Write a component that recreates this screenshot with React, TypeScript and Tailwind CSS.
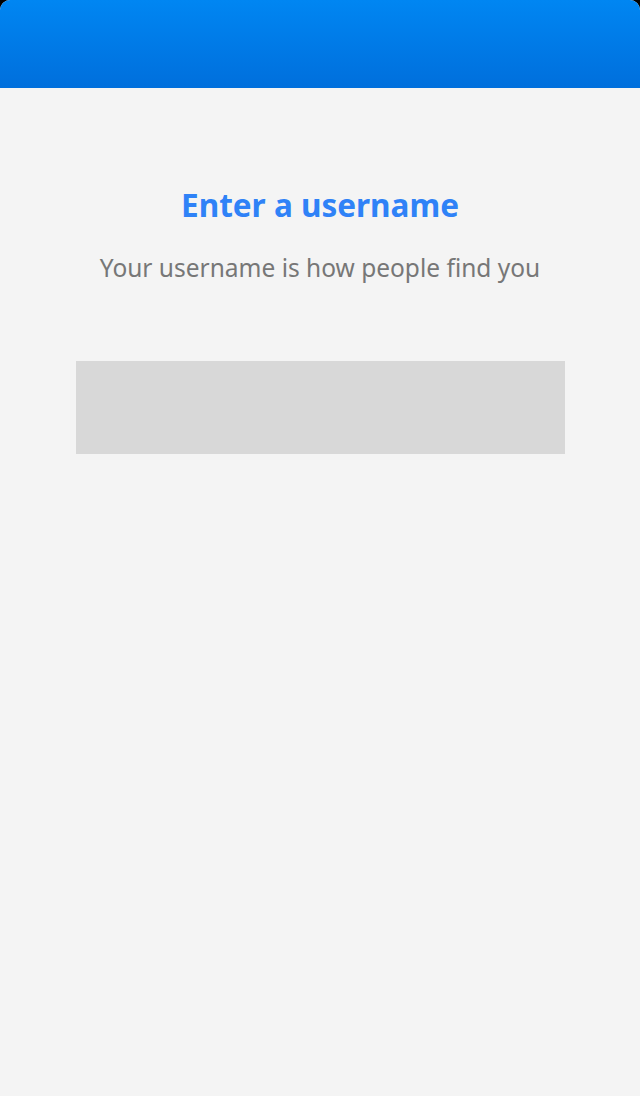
export default function App() {
  return (
    <div className="h-[1096px] w-[640px] bg-black" style={{ fontFamily: '"Noto Sans", sans-serif' }}>
      <div className="flex h-full flex-col overflow-hidden rounded-t-[10px] bg-[#f4f4f4]">
        {/* top bar */}
        <div className="h-[88px] shrink-0 bg-gradient-to-b from-[#0086f2] to-[#006fdc]" />

        <div className="flex flex-col items-center pt-[93px]">
          <h1 className="text-[31.5px] font-bold leading-[48px] text-[#2f82f7]">Enter a username</h1>
          <p className="mt-[23px] text-[24.5px] leading-[32px] text-[#777777]">
            Your username is how people find you
          </p>
          <div className="mt-[77px] h-[93px] w-[489px] bg-[#d8d8d8]" />
        </div>
      </div>
    </div>
  );
}
